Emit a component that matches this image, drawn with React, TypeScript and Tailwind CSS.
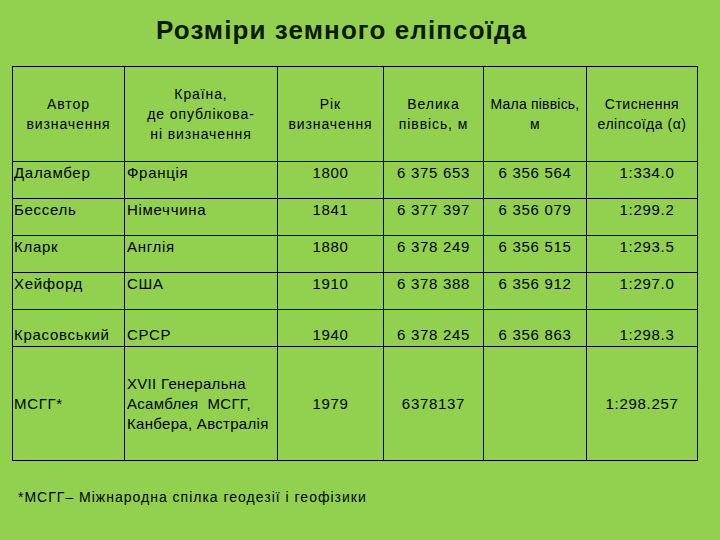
import React from 'react';

type Row = {
  author: string;
  country: React.ReactNode;
  year: string;
  major: string;
  minor: string;
  flat: string;
};

const rows: Row[] = [
  { author: 'Даламбер', country: 'Франція', year: '1800', major: '6 375 653', minor: '6 356 564', flat: '1:334.0' },
  { author: 'Бессель', country: 'Німеччина', year: '1841', major: '6 377 397', minor: '6 356 079', flat: '1:299.2' },
  { author: 'Кларк', country: 'Англія', year: '1880', major: '6 378 249', minor: '6 356 515', flat: '1:293.5' },
  { author: 'Хейфорд', country: 'США', year: '1910', major: '6 378 388', minor: '6 356 912', flat: '1:297.0' },
];

const cell = 'border border-black p-0';

export default function App() {
  return (
    <div
      className="w-[720px] h-[540px] bg-[#92d050] text-black overflow-hidden"
      style={{ fontFamily: '"Liberation Sans", Arial, sans-serif' }}
    >
      <h1 className="pt-[14px] pl-[156px] h-[66px] text-[26px] font-bold leading-[32px] tracking-[1.1px] text-[#0b1a00]">
        Розміри земного еліпсоїда
      </h1>

      <table className="ml-[12px] border-collapse table-fixed w-[685px] text-[15px] tracking-[0.7px]">
        <colgroup>
          <col className="w-[112px]" />
          <col className="w-[153px]" />
          <col className="w-[106px]" />
          <col className="w-[100px]" />
          <col className="w-[103px]" />
          <col className="w-[111px]" />
        </colgroup>
        <thead>
          <tr className="h-[95px] text-[14px] leading-[20px] tracking-[0.9px] text-center">
            <th className={`${cell} font-normal`}>Автор<br />визначення</th>
            <th className={`${cell} font-normal`}>Країна,<br />де опублікова-<br />ні визначення</th>
            <th className={`${cell} font-normal`}>Рік<br />визначення</th>
            <th className={`${cell} font-normal`}>Велика<br />піввісь, м</th>
            <th className={`${cell} font-normal tracking-[0.2px]`}>Мала піввісь,<br />м</th>
            <th className={`${cell} font-normal tracking-[0.5px]`}>Стиснення<br />еліпсоїда (α)</th>
          </tr>
        </thead>
        <tbody>
          {rows.map((r) => (
            <tr key={r.author} className="h-[37px] align-top leading-[20px]">
              <td className={`${cell} pl-[1px] pt-[1px]`}>{r.author}</td>
              <td className={`${cell} pl-[2px] pt-[1px]`}>{r.country}</td>
              <td className={`${cell} text-center pt-[1px]`}>{r.year}</td>
              <td className={`${cell} text-center pt-[1px]`}>{r.major}</td>
              <td className={`${cell} text-center pt-[1px]`}>{r.minor}</td>
              <td className={`${cell} text-center pt-[1px] pl-[10px]`}>{r.flat}</td>
            </tr>
          ))}
          <tr className="h-[37px] align-bottom leading-[20px]">
            <td className={`${cell} pl-[1px] pb-[1px]`}>Красовський</td>
            <td className={`${cell} pl-[2px] pb-[1px]`}>СРСР</td>
            <td className={`${cell} text-center pb-[1px]`}>1940</td>
            <td className={`${cell} text-center pb-[1px]`}>6 378 245</td>
            <td className={`${cell} text-center pb-[1px]`}>6 356 863</td>
            <td className={`${cell} text-center pb-[1px] pl-[10px]`}>1:298.3</td>
          </tr>
          <tr className="h-[114px] align-middle leading-[20px]">
            <td className={`${cell} pl-[1px]`}>МСГГ*</td>
            <td className={`${cell} pl-[2px] tracking-[0.3px]`}>XVII Генеральна<br />Асамблея&nbsp; МСГГ,<br />Канбера, Австралія</td>
            <td className={`${cell} text-center`}>1979</td>
            <td className={`${cell} text-center`}>6378137</td>
            <td className={cell}></td>
            <td className={`${cell} text-center`}>1:298.257</td>
          </tr>
        </tbody>
      </table>

      <p className="mt-[26px] pl-[18px] text-[14px] leading-[20px] tracking-[1px]">
        *МСГГ– Міжнародна спілка геодезії і геофізики
      </p>
    </div>
  );
}
